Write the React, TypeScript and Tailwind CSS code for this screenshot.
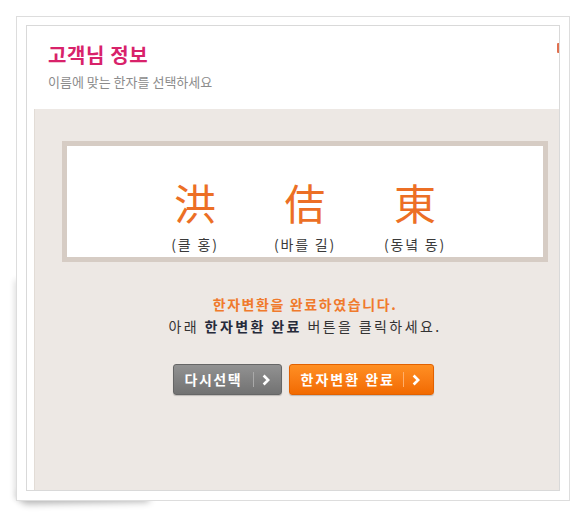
const FONT = {
  fontFamily: '"Noto Sans CJK KR", "Noto Sans", sans-serif',
};

const HANJA = [
  { char: "洪", reading: "(클 홍)" },
  { char: "佶", reading: "(바를 길)" },
  { char: "東", reading: "(동녘 동)" },
];

function Chevron() {
  return (
    <svg width="8" height="12" viewBox="0 0 8 12" fill="none">
      <path
        d="M1.6 1.5 L6.2 6 L1.6 10.5"
        stroke="white"
        strokeWidth="2.6"
        strokeLinejoin="miter"
      />
    </svg>
  );
}

export default function App() {
  return (
    <div className="w-[586px] h-[517px] bg-white pt-[16px] pl-[16px]" style={FONT}>
      <div className="relative w-[554px] h-[485px]">
        {/* page curl shadow */}
        <div className="absolute left-[6px] bottom-[3px] w-[130px] h-[12px] rounded-bl-[8px] shadow-[-3px_6px_7px_rgba(0,0,0,0.3)] -rotate-[1deg] origin-left" />
        <div className="absolute left-[2px] top-[260px] bottom-[6px] w-[6px] shadow-[-3px_4px_6px_rgba(0,0,0,0.16)]" />
        <div className="relative h-full border border-[#dddddd] bg-white pt-[8px] pl-[9px]">
          <div className="w-[534px] h-[466px] border border-[#d9d9d9] flex flex-col">
            <div className="relative h-[83px] pl-[21px] pt-[17px]">
              <h1 className="text-[20px] font-bold leading-[24px] text-[#d8226a] tracking-[0.6px]">
                고객님 정보
              </h1>
              <p className="mt-[7px] text-[13px] leading-[15px] text-[#8c8c8c]">
                이름에 맞는 한자를 선택하세요
              </p>
              <div className="absolute right-0 top-[17px] w-[2px] h-[10px] bg-[#e0704f] rounded-l-[1px]" />
            </div>
            <div className="flex-1 ml-[7px] bg-[#ede8e4] border-l border-[#e2dcd6] pl-[27px] pt-[32px]">
              <div className="w-[486px] h-[121px] border-[5px] border-[#d6ccc4] bg-white flex justify-center pt-[32px]">
                {HANJA.map((h) => (
                  <div key={h.char} className="w-[110px] flex flex-col items-center">
                    <span className="text-[42px] leading-[48px] text-[#ec6f25]">{h.char}</span>
                    <span className="mt-[9px] text-[14px] leading-[18px] tracking-[1.8px] text-[#3a3a3a]">
                      {h.reading}
                    </span>
                  </div>
                ))}
              </div>
              <div className="w-[486px] mt-[31px] flex flex-col items-center text-[14px] leading-[22px]">
                <p className="font-bold tracking-[1.6px] text-[#f07a2c]">한자변환을 완료하였습니다.</p>
                <p className="tracking-[2.4px] text-[#333333]">
                  아래 <b className="text-[#262a3a]">한자변환 완료</b> 버튼을 클릭하세요.
                </p>
              </div>
              <div className="w-[486px] mt-[27px] pr-[4px] flex justify-center gap-[7px]">
                <button className="w-[109px] h-[31px] rounded-[3px] border border-[#666666] bg-gradient-to-b from-[#929292] to-[#727272] flex items-center pl-[11px] text-white text-[14px] font-bold tracking-[1.5px] shadow-[0_1px_1px_rgba(0,0,0,0.2)]">
                  <span>다시선택</span>
                  <span className="ml-[11px] h-[15px] border-l border-[#a9a9a9]" />
                  <span className="ml-[8px] flex">
                    <Chevron />
                  </span>
                </button>
                <button className="w-[145px] h-[31px] rounded-[3px] border border-[#e26100] bg-gradient-to-b from-[#ff8f22] to-[#f26a00] flex items-center pl-[11px] text-white text-[14px] font-bold tracking-[2px] shadow-[0_1px_1px_rgba(0,0,0,0.2)]">
                  <span>한자변환 완료</span>
                  <span className="ml-[8px] h-[15px] border-l border-[#ffae6a]" />
                  <span className="ml-[8px] flex">
                    <Chevron />
                  </span>
                </button>
              </div>
            </div>
          </div>
        </div>
      </div>
    </div>
  );
}
